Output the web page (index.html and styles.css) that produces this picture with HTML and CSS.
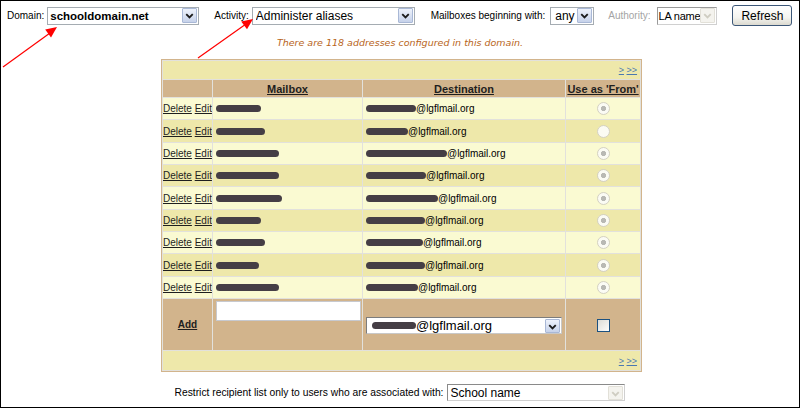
FILE: index.html
```html
<!DOCTYPE html>
<html lang="en">
<head>
    <meta charset="UTF-8">
    <meta name="viewport" content="width=device-width, initial-scale=1.0">
    <title>Mail aliases</title>
    <link rel="stylesheet" href="styles.css">
</head>
<body>
<div class="frame">
    <div class="toolbar">
        <span class="label">Domain:</span>
        <div class="combo combo-domain">
            <span class="combo-text">schooldomain.net</span>
            <span class="drop"><svg viewBox="0 0 13 14"><path d="M3 5.5l3.5 3.5 3.5-3.5"/></svg></span>
        </div>
        <span class="label">Activity:</span>
        <div class="combo combo-activity">
            <span class="combo-text">Administer aliases</span>
            <span class="drop"><svg viewBox="0 0 13 14"><path d="M3 5.5l3.5 3.5 3.5-3.5"/></svg></span>
        </div>
        <span class="label label-start">Mailboxes beginning with:</span>
        <div class="combo combo-any">
            <span class="combo-text">any</span>
            <span class="drop"><svg viewBox="0 0 13 14"><path d="M3 5.5l3.5 3.5 3.5-3.5"/></svg></span>
        </div>
        <span class="label label-authority muted">Authority:</span>
        <div class="combo combo-authority disabled">
            <span class="combo-text">LA name</span>
            <span class="drop"><svg viewBox="0 0 13 14"><path d="M3 5.5l3.5 3.5 3.5-3.5"/></svg></span>
        </div>
        <button class="refresh">Refresh</button>
    </div>

    <p class="notice">There are 118 addresses configured in this domain.</p>

    <table class="aliases">
        <colgroup>
            <col class="c-actions">
            <col class="c-mailbox">
            <col class="c-dest">
            <col class="c-from">
        </colgroup>
        <tr class="pager"><td colspan="4"><a href="#">&gt;</a> <a href="#">&gt;&gt;</a></td></tr>
        <tr class="head">
            <th></th>
            <th><a href="#">Mailbox</a></th>
            <th><a href="#">Destination</a></th>
            <th><a href="#">Use as 'From'</a></th>
        </tr>
        <tr class="row">
            <td class="actions"><a href="#">Delete</a> <a href="#">Edit</a></td>
            <td class="mailbox"><span class="blot" style="width:45px"></span></td>
            <td class="dest"><span class="blot" style="width:50px"></span>@lgflmail.org</td>
            <td class="from"><input type="radio" name="from1" checked disabled></td>
        </tr>
        <tr class="row">
            <td class="actions"><a href="#">Delete</a> <a href="#">Edit</a></td>
            <td class="mailbox"><span class="blot" style="width:49px"></span></td>
            <td class="dest"><span class="blot" style="width:42px"></span>@lgflmail.org</td>
            <td class="from"><input type="radio" name="from2" disabled></td>
        </tr>
        <tr class="row">
            <td class="actions"><a href="#">Delete</a> <a href="#">Edit</a></td>
            <td class="mailbox"><span class="blot" style="width:63px"></span></td>
            <td class="dest"><span class="blot" style="width:81px"></span>@lgflmail.org</td>
            <td class="from"><input type="radio" name="from3" checked disabled></td>
        </tr>
        <tr class="row">
            <td class="actions"><a href="#">Delete</a> <a href="#">Edit</a></td>
            <td class="mailbox"><span class="blot" style="width:63px"></span></td>
            <td class="dest"><span class="blot" style="width:60px"></span>@lgflmail.org</td>
            <td class="from"><input type="radio" name="from4" checked disabled></td>
        </tr>
        <tr class="row">
            <td class="actions"><a href="#">Delete</a> <a href="#">Edit</a></td>
            <td class="mailbox"><span class="blot" style="width:66px"></span></td>
            <td class="dest"><span class="blot" style="width:72px"></span>@lgflmail.org</td>
            <td class="from"><input type="radio" name="from5" checked disabled></td>
        </tr>
        <tr class="row">
            <td class="actions"><a href="#">Delete</a> <a href="#">Edit</a></td>
            <td class="mailbox"><span class="blot" style="width:45px"></span></td>
            <td class="dest"><span class="blot" style="width:59px"></span>@lgflmail.org</td>
            <td class="from"><input type="radio" name="from6" checked disabled></td>
        </tr>
        <tr class="row">
            <td class="actions"><a href="#">Delete</a> <a href="#">Edit</a></td>
            <td class="mailbox"><span class="blot" style="width:49px"></span></td>
            <td class="dest"><span class="blot" style="width:57px"></span>@lgflmail.org</td>
            <td class="from"><input type="radio" name="from7" checked disabled></td>
        </tr>
        <tr class="row">
            <td class="actions"><a href="#">Delete</a> <a href="#">Edit</a></td>
            <td class="mailbox"><span class="blot" style="width:43px"></span></td>
            <td class="dest"><span class="blot" style="width:59px"></span>@lgflmail.org</td>
            <td class="from"><input type="radio" name="from8" checked disabled></td>
        </tr>
        <tr class="row">
            <td class="actions"><a href="#">Delete</a> <a href="#">Edit</a></td>
            <td class="mailbox"><span class="blot" style="width:63px"></span></td>
            <td class="dest"><span class="blot" style="width:52px"></span>@lgflmail.org</td>
            <td class="from"><input type="radio" name="from9" checked disabled></td>
        </tr>
        <tr class="add">
            <td class="actions"><a href="#" class="add-link">Add</a></td>
            <td class="mailbox"><input type="text" class="new-mailbox"></td>
            <td class="dest">
                <div class="combo combo-dest">
                    <span class="combo-text"><span class="blot" style="width:44px"></span>@lgflmail.org</span>
                    <span class="drop"><svg viewBox="0 0 13 14"><path d="M3 5.5l3.5 3.5 3.5-3.5"/></svg></span>
                </div>
            </td>
            <td class="from"><input type="checkbox" class="use-from"></td>
        </tr>
        <tr class="pager"><td colspan="4"><a href="#">&gt;</a> <a href="#">&gt;&gt;</a></td></tr>
    </table>

    <div class="restrict">
        <span>Restrict recipient list only to users who are associated with:</span>
        <div class="combo combo-school disabled">
            <span class="combo-text">School name</span>
            <span class="drop"><svg viewBox="0 0 13 14"><path d="M3 5.5l3.5 3.5 3.5-3.5"/></svg></span>
        </div>
    </div>

    <!-- red pointers drawn over the toolbar -->
    <svg class="pointers" width="800" height="409" viewBox="0 0 800 409">
        <line x1="3" y1="67" x2="50" y2="33"/>
        <polygon points="57,27 51,37.5 45.2,29.5"/>
        <line x1="198" y1="58" x2="246" y2="24"/>
        <polygon points="253,19 247,29.3 241.2,21.4"/>
    </svg>
</div>
</body>
</html>
```

FILE: styles.css
```css
body {
    margin: 0;
    font-family: "Liberation Sans", Arial, sans-serif;
    font-size: 10px;
    color: #000;
    background: #fff;
}
.frame {
    position: relative;
    width: 798px;
    height: 406px;
    border: 1px solid #000;
    overflow: hidden;
}
.toolbar {
    display: flex;
    align-items: center;
    height: 21px;
    margin: 4px 0 0 6px;
}
.label {
    margin-right: 3px;
    white-space: nowrap;
}
.label-start {
    margin-right: 5px;
}
.label-authority {
    margin-right: 7px;
}
.muted {
    color: #a4a4a4;
}
.combo {
    display: inline-flex;
    align-items: center;
    box-sizing: border-box;
    height: 18px;
    padding: 0 1px 0 2px;
    border: 1px solid #a5acb2;
    background: #fff;
    font-size: 12px;
    white-space: nowrap;
}
.combo-text {
    flex: 1;
    min-width: 0;
    overflow: hidden;
    display: flex;
    align-items: center;
}
.drop {
    flex: none;
    box-sizing: border-box;
    width: 15px;
    height: 15px;
    border: 1px solid #a9b8d6;
    border-radius: 1px;
    background: linear-gradient(#eef2fb, #c6d2ea);
}
.drop svg {
    display: block;
    width: 13px;
    height: 13px;
}
.drop path {
    fill: none;
    stroke: #1b1b1b;
    stroke-width: 2;
}
.disabled .drop {
    border-color: #e2e0d8;
    background: #f4f3ee;
}
.disabled .drop path {
    stroke: #cfcdc2;
}
.combo-domain {
    width: 152px;
    margin-right: 15px;
    font-weight: bold;
    font-size: 11.5px;
}
.combo-activity {
    width: 163px;
    margin-right: 16px;
    padding-left: 3px;
}
.combo-any {
    width: 44px;
    margin-right: 14px;
    padding-left: 4px;
}
.combo-authority {
    width: 60px;
    margin-right: 15px;
    padding-left: 0;
    font-size: 11px;
    letter-spacing: -0.2px;
    border-color: #9a9a9a #d0d0d0 #d0d0d0 #9a9a9a;
}
.combo-authority .combo-text {
    overflow: visible;
}
.refresh {
    width: 60px;
    height: 21px;
    padding: 0;
    font-family: inherit;
    font-size: 12px;
    color: #000;
    border: 1px solid #3c5778;
    border-radius: 3px;
    background: linear-gradient(#ffffff, #f4f4f0 60%, #dcdad0);
}

.notice {
    margin: 11px 0 0;
    line-height: 12px;
    text-align: center;
    font-family: "DejaVu Sans", Verdana, sans-serif;
    font-style: italic;
    font-size: 9.5px;
    color: #b8651b;
}

.aliases {
    table-layout: fixed;
    width: 481px;
    margin: 10px 0 0 160px;
    border: 1px solid #d2b48c;
    border-spacing: 1px;
    background: #e2e1dc;
}
.c-actions { width: 49px; }
.c-mailbox { width: 149px; }
.c-dest { width: 202px; }
.c-from { width: 74px; }
.aliases td, .aliases th {
    padding: 0;
    white-space: nowrap;
    overflow: hidden;
}
.aliases a {
    color: #1e1e1e;
}
.pager td {
    height: 18px;
    text-align: right;
    padding-right: 3px;
    background: #eee8aa;
    font-size: 9px;
}
.pager:last-child td {
    height: 19px;
}
.aliases .pager a {
    color: #4a78b0;
}
.head th {
    height: 17px;
    background: #d2b48c;
    font-size: 11px;
    font-weight: bold;
}
.row td {
    height: 21.35px;
    background: #fafad2;
}
.row:nth-child(even) td {
    background: #eee8aa;
}
.actions {
    padding-left: 1px;
}
.aliases .mailbox, .aliases .dest {
    padding-left: 3px;
}
.from {
    text-align: center;
}
.blot {
    display: inline-block;
    height: 7px;
    border-radius: 4px;
    background: #453e45;
    vertical-align: 0;
    filter: blur(0.3px);
}
.from input[type=radio] {
    appearance: none;
    box-sizing: border-box;
    width: 13px;
    height: 13px;
    margin: 0;
    vertical-align: middle;
    border: 1px solid #d4d1c2;
    border-radius: 50%;
    background: #fbfbf4;
}
.from input[type=radio]:checked {
    background: radial-gradient(circle, #b9b9b4 0 2.3px, #fbfbf4 2.9px);
}

.add td {
    height: 51px;
    background: #d2b48c;
}
.add-link {
    display: block;
    text-align: center;
    font-weight: bold;
}
.add .mailbox {
    vertical-align: top;
}
.new-mailbox {
    box-sizing: border-box;
    width: 145px;
    height: 20px;
    margin: 2px 0 0;
    border: 1px solid #c7c9cf;
    background: #fff;
}
.combo-dest {
    width: 196px;
    height: 17px;
    margin-top: 2px;
    padding-left: 5px;
    font-size: 13px;
    border-color: #7c7c7c #c8c8c8 #c8c8c8 #7c7c7c;
}
.combo-dest .drop {
    height: 14px;
}
.use-from {
    appearance: none;
    box-sizing: border-box;
    width: 13px;
    height: 13px;
    margin: 2px 0 0;
    vertical-align: middle;
    border: 1px solid #1c5180;
    background: linear-gradient(135deg, #dcdcd6, #fdfdfb);
}

.restrict {
    display: flex;
    justify-content: center;
    align-items: center;
    gap: 4px;
    margin-top: 12px;
    font-size: 10.3px;
}
.combo-school {
    width: 178px;
    height: 17px;
    border-color: #8a8a8a #d0d0d0 #d0d0d0 #8a8a8a;
}
.combo-school .drop {
    height: 14px;
}

.pointers {
    position: absolute;
    left: -1px;
    top: -1px;
    pointer-events: none;
}
.pointers line {
    stroke: #f00;
    stroke-width: 1.2;
}
.pointers polygon {
    fill: #f00;
}
```
